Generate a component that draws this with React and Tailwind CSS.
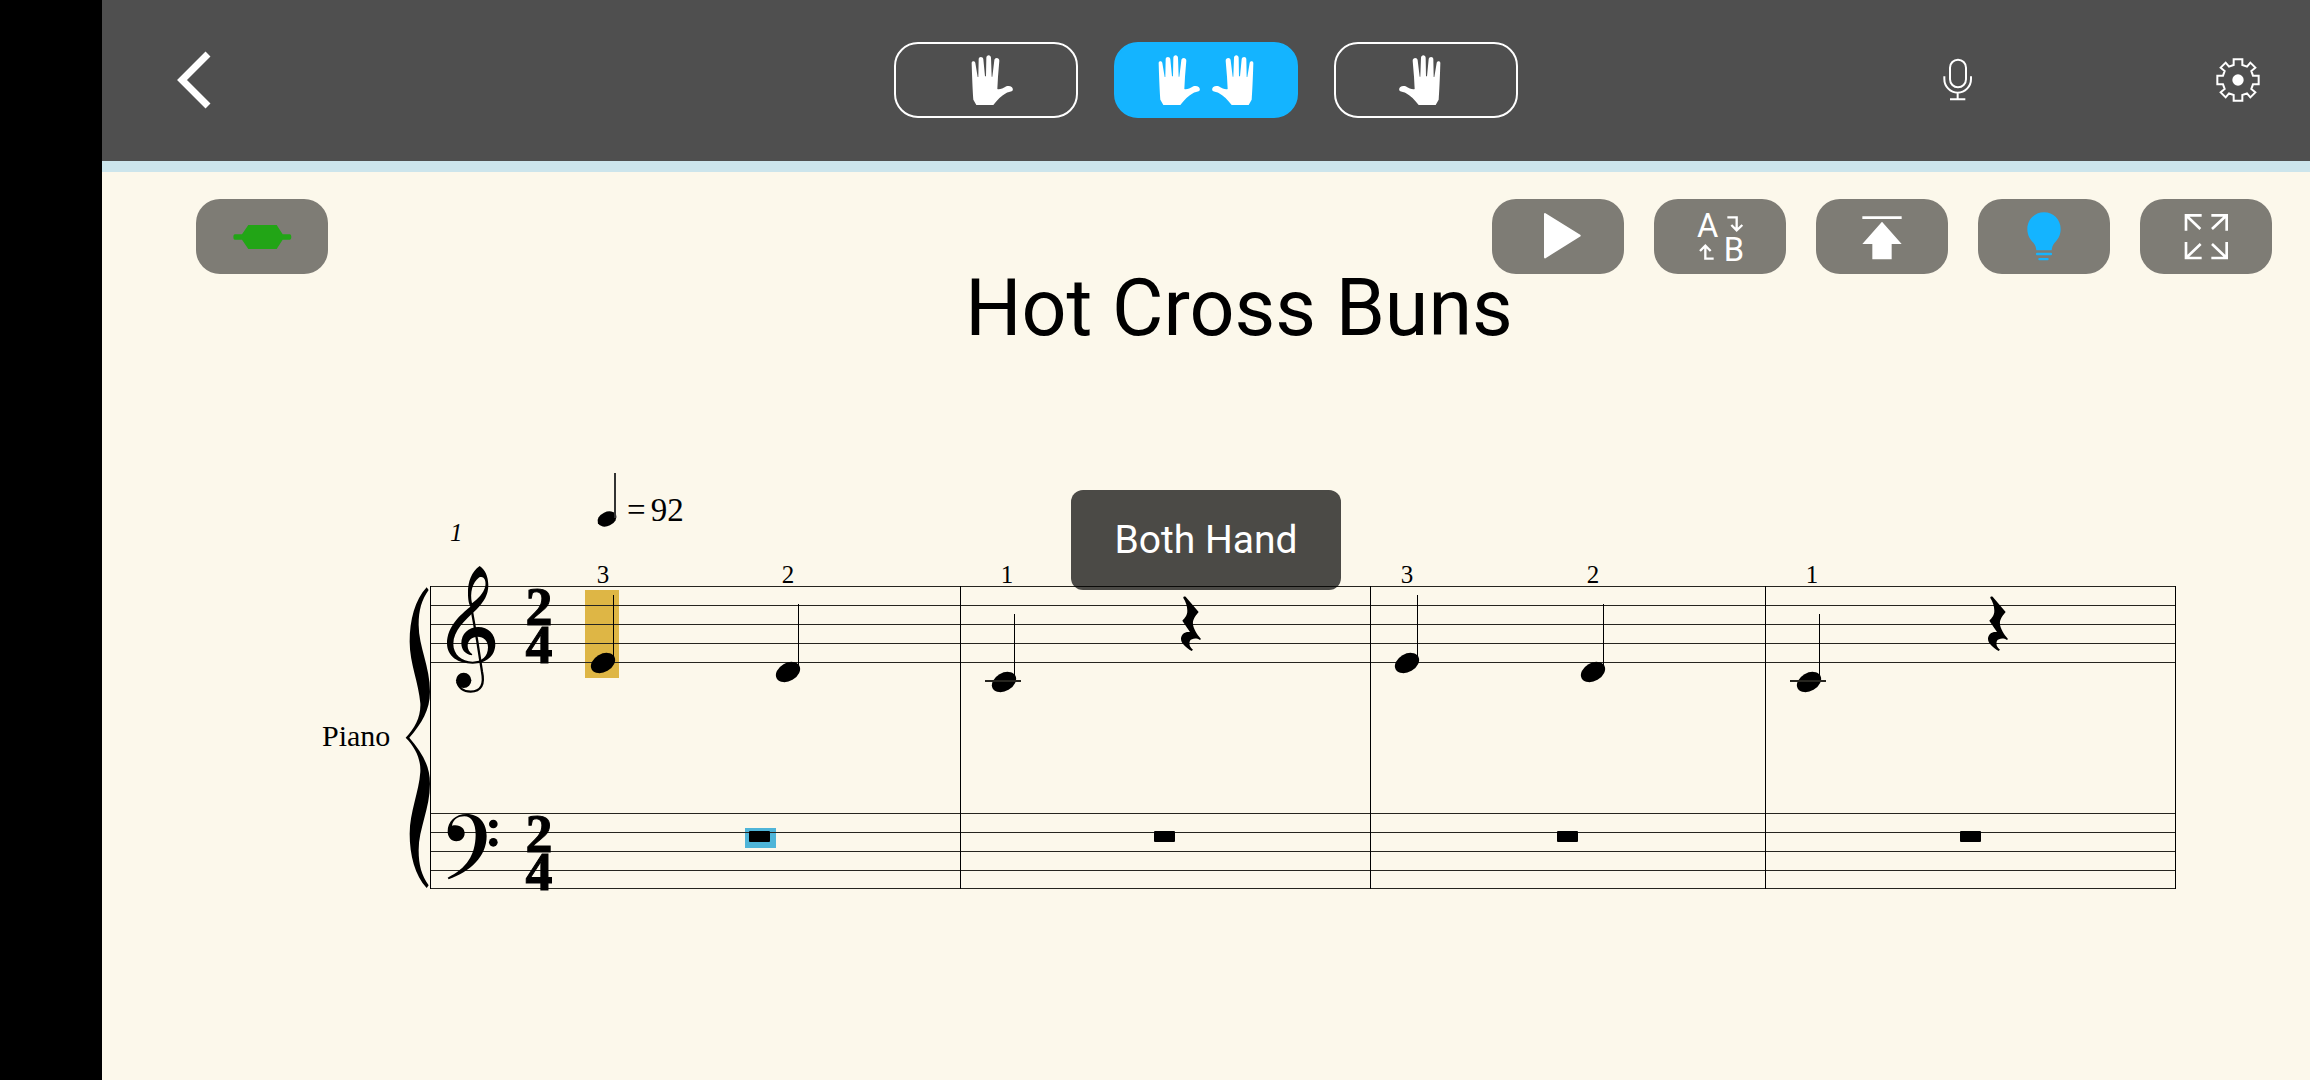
import { useState } from "react";

const hands = [
  { id: "left", label: "Left Hand" },
  { id: "both", label: "Both Hand" },
  { id: "right", label: "Right Hand" },
];

// score positions, in the units of the score's viewBox
const staffLines = [126, 145, 164, 183, 202, 353, 372, 391, 410, 428];
const barLines = [328, 858, 1268, 1663, 2073];
const notes = [
  { x: 501, y: 203, finger: 3 },
  { x: 686, y: 212, finger: 2 },
  { x: 902, y: 222, finger: 1, ledger: true },
  { x: 1305, y: 203, finger: 3 },
  { x: 1491, y: 212, finger: 2 },
  { x: 1707, y: 222, finger: 1, ledger: true },
];
const quarterRests = [838, 1645];
const wholeRests = [647, 1052, 1455, 1858];

const Hand = ({ flip }) => (
  <svg
    viewBox="-36 0 162 150"
    className={flip ? "w-[54px] h-[50px] -scale-x-100" : "w-[54px] h-[50px]"}
    fill="currentColor"
  >
    <path d="M2 25C1 17 12 16 13 24L20 66H22L23 13C23 4 36 4 37 13L42 64H45L46 8C46-2 60-2 60 8L62 65H64L70 16C71 6 85 7 85 17L81 65L79 102C85 104 95 101 106 94C118 90 128 97 125 106C122 112 113 110 106 114C92 121 78 136 67 150H16L7 134C5 110 3 60 2 25Z" />
  </svg>
);

const ToolButton = ({ label, onClick, children }) => (
  <button
    type="button"
    aria-label={label}
    onClick={onClick}
    className="w-[132px] h-[75px] rounded-3xl bg-black/50 text-white"
  >
    <svg viewBox="0 0 396 225" className="w-full h-full" fill="currentColor">
      {children}
    </svg>
  </button>
);

const Header = ({ hand, setHand }) => (
  <header className="grid grid-cols-[1fr_auto_1fr] items-center bg-[#4f4f4f] text-white pt-[42px] pb-[43px] border-b-[11px] border-[#cce5ec]">
    <div className="pl-[74px]">
      <button type="button" aria-label="Back" className="block">
        <svg
          viewBox="288 155 105 174"
          className="w-[35px] h-[58px]"
          fill="none"
          stroke="currentColor"
          strokeWidth="21"
        >
          <path d="M384 164L306 242L384 320" />
        </svg>
      </button>
    </div>

    <div className="flex gap-9">
      {hands.map((h) => (
        <button
          key={h.id}
          type="button"
          aria-label={h.label}
          aria-pressed={hand === h.id}
          onClick={() => setHand(h.id)}
          className={
            hand === h.id
              ? "flex items-center justify-center gap-3 w-[184px] h-[76px] rounded-3xl border-2 border-[#14b4ff] bg-[#14b4ff]"
              : "flex items-center justify-center gap-3 w-[184px] h-[76px] rounded-3xl border-2 border-white"
          }
        >
          {h.id !== "right" && <Hand />}
          {h.id !== "left" && <Hand flip />}
        </button>
      ))}
    </div>

    <div className="flex items-center justify-end gap-[243px] pr-[50px]">
      <button type="button" aria-label="Microphone">
        <svg
          viewBox="129 83 90 132"
          className="w-[30px] h-11"
          fill="none"
          stroke="currentColor"
          strokeWidth="6"
        >
          <rect x="150" y="88" width="48" height="83" rx="24" />
          <path d="M133 138V146A40 41 0 0 0 213 146V138M173 188V206M150 207H196" />
        </svg>
      </button>
      <button type="button" aria-label="Settings">
        <svg
          viewBox="-66 -66 132 132"
          className="size-11"
          fill="none"
          stroke="currentColor"
          strokeWidth="6"
        >
          <path d="M-13-62H13V-45L27-40L37-52L52-37L40-27L45-13H62V13H45L40 27L52 37L37 52L27 40L13 45V62H-13V45L-27 40L-37 52L-52 37L-40 27L-45 13H-62V-13H-45L-40-27L-52-37L-37-52L-27-40L-13-45Z" />
          <circle r="17" fill="currentColor" stroke="none" />
        </svg>
      </button>
    </div>
  </header>
);

const Toolbar = () => (
  <div className="flex justify-between pt-[27px] pl-[94px] pr-[38px]">
    <ToolButton label="Connection">
      <g className="text-[#22a516]" fill="currentColor">
        <path d="M157 78H242L260 106H282Q286 106 286 114T282 122H260L242 150H157L138 122H116Q112 122 112 114T116 106H138Z" />
      </g>
    </ToolButton>

    <div className="flex gap-[30px]">
      <ToolButton label="Play">
        <path
          d="M159 45L263 110L159 175Z"
          stroke="currentColor"
          strokeWidth="6"
          strokeLinejoin="round"
        />
      </ToolButton>
      <ToolButton label="Loop from A to B">
        <g className="font-[Roboto,sans-serif]" fontSize="98">
          <text x="129" y="113">
            A
          </text>
          <text x="209" y="185">
            B
          </text>
        </g>
        <path
          d="M220 55H248V93M232 78L248 94L265 78M179 179H154V141M138 156L154 140L170 156"
          fill="none"
          stroke="currentColor"
          strokeWidth="7"
        />
      </ToolButton>
      <ToolButton label="Back to top">
        <path d="M139 52H257V60H139ZM198 68L257 135H227V181H169V135H139Z" />
      </ToolButton>
      <ToolButton label="Hints">
        <g className="text-[#14b4ff]" fill="currentColor">
          <path d="M198 40C226 40 248 62 248 90C248 109 240 121 230 131C224 138 222 144 221 154H175C174 144 172 138 166 131C156 121 148 109 148 90C148 62 170 40 198 40Z" />
          <rect x="174" y="161" width="48" height="8" rx="3" />
          <rect x="181" y="177" width="31" height="7" rx="3" />
        </g>
      </ToolButton>
      <ToolButton label="Full screen">
        <path
          d="M185 49H138V95M138 49L181 90M214 49H260V95M260 49L216 90M138 129V177H185M138 177L182 135M260 129V177H214M260 177L216 135"
          fill="none"
          stroke="currentColor"
          strokeWidth="8"
        />
      </ToolButton>
    </div>
  </div>
);

const Score = () => (
  <svg
    viewBox="0 0 2208 460"
    className="w-full h-auto font-['Liberation_Serif',serif]"
    role="img"
    aria-label="Piano score"
  >
    {/* current beat */}
    <rect x="483" y="130" width="34" height="88" fill="#deb645" />
    <rect x="643" y="368" width="31" height="20" fill="#4fb5d8" />

    {/* staves */}
    <g fill="#26251f">
      {staffLines.map((y) => (
        <rect key={y} x="328" y={y} width="1746" height="1" />
      ))}
    </g>
    {barLines.map((x) => (
      <rect key={x} x={x} y="126" width="1" height="303" />
    ))}

    {/* brace and clefs */}
    <g transform="translate(198 100) scale(0.3333)">
      <path d="M380 82C345 120 329 180 329 245C329 310 357 370 361 430C363 470 345 505 317 533C345 561 363 596 361 636C357 696 329 756 329 821C329 886 345 946 380 984L386 976C365 946 356 916 356 871C356 806 390 746 390 671C390 616 365 576 328 533C365 490 390 450 390 395C390 320 356 260 356 195C356 150 365 120 386 90Z" />
      <path d="M443 953C500 925 526 885 527 825C527 790 515 769 493 769C474 769 460 778 456 797C480 792 494 805 494 820C494 834 483 844 469 844C454 844 443 832 443 814C443 785 466 762 500 762C538 762 560 790 560 828C560 890 510 935 446 958Z" />
      <circle cx="580" cy="792" r="13" />
      <circle cx="580" cy="847" r="13" />
    </g>
    <g transform="translate(298 0) scale(0.3333)">
      <path
        fillRule="evenodd"
        d="M239 318C215 335 203 365 204 400C204 420 207 432 211 440C180 465 141 500 141 550C141 590 175 611 218 611C258 611 286 588 286 552C286 522 264 501 235 501C205 501 184 522 184 550C184 568 195 583 215 586L217 583C208 577 203 567 203 558C203 541 216 530 233 530C252 530 264 543 264 562C264 590 245 605 218 605C185 605 160 583 160 552C160 512 195 480 228 450C252 425 265 405 265 375C265 350 255 328 239 318ZM216 430C209 398 217 368 238 352C252 346 259 362 256 378C251 400 234 416 216 430Z"
      />
      <path
        d="M216 455L232 545L246 635C254 672 244 695 212 695C190 695 175 683 172 665"
        fill="none"
        stroke="#000"
        strokeWidth="7"
      />
      <circle cx="191" cy="661" r="23" />
    </g>

    {/* time signatures */}
    <g
      fontSize="54"
      fontWeight="700"
      textAnchor="middle"
      stroke="#000"
      strokeWidth="1"
    >
      <text>
        <tspan x="437" y="165">
          2
        </tspan>
        <tspan x="437" y="203">
          4
        </tspan>
      </text>
      <text>
        <tspan x="437" y="392">
          2
        </tspan>
        <tspan x="437" y="430">
          4
        </tspan>
      </text>
    </g>

    {/* tempo */}
    <ellipse rx="10" ry="7" transform="translate(505 59) rotate(-25)" />
    <rect x="512" y="13" width="2" height="45" fill="#333" />
    <text x="525" y="61" fontSize="33">
      =<tspan dx="5">92</tspan>
    </text>

    <text x="348" y="81" fontSize="25" fontStyle="italic">
      1
    </text>
    <text x="220" y="286" fontSize="30">
      Piano
    </text>

    {notes.map((n) => (
      <g key={n.x}>
        <ellipse
          rx="13"
          ry="9"
          transform={`translate(${n.x} ${n.y}) rotate(-30)`}
        />
        <rect x={n.x + 10} y={n.y - 68} width="1" height="66" />
        {n.ledger && (
          <rect x={n.x - 19} y="220" width="36" height="2" fill="#26251f" />
        )}
        <text
          x={n.ledger ? n.x + 3 : n.x}
          y="123"
          fontSize="25"
          textAnchor="middle"
        >
          {n.finger}
        </text>
      </g>
    ))}

    {quarterRests.map((x) => (
      <path
        key={x}
        transform={`translate(${x} 100) scale(0.3333)`}
        d="M737 110L776 156C764 170 758 180 759 192C760 205 770 222 783 237L780 240C768 232 755 236 750 242C746 252 750 262 759 269L755 273C738 262 723 250 723 236C724 222 735 214 750 216L727 182C736 172 742 166 742 152C742 138 737 125 730 114C729 110 733 108 737 110Z"
      />
    ))}
    {wholeRests.map((x) => (
      <rect key={x} x={x} y="371" width="21" height="11" rx="1" />
    ))}
  </svg>
);

export default function App() {
  const [hand, setHand] = useState("both");
  const current = hands.find((h) => h.id === hand);

  return (
    <div className="flex min-h-screen bg-black pl-[102px]">
      <div className="relative flex-1 bg-[#fcf8eb] font-[Roboto,sans-serif]">
        <Header hand={hand} setHand={setHand} />
        <main>
          <Toolbar />
          <h1 className="pl-[66px] text-center text-[79px] leading-[68px] text-black">
            Hot Cross Buns
          </h1>
          <div className="pt-[118px]">
            <Score />
          </div>
        </main>

        <div
          role="status"
          className="absolute top-[490px] left-1/2 -translate-x-1/2 w-[270px] h-[100px] flex items-center justify-center rounded-xl bg-black/70 text-white text-[39px]"
        >
          {current.label}
        </div>
      </div>
    </div>
  );
}
